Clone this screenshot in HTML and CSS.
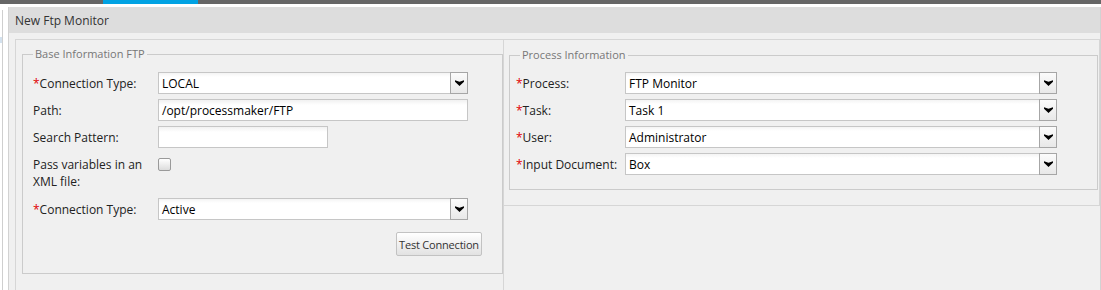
FILE: index.html
```html
<!DOCTYPE html>
<html lang="en">
<head>
  <meta charset="UTF-8">
  <title>New Ftp Monitor</title>
  <link rel="stylesheet" href="styles.css">
</head>
<body>
  <div class="topbar"><div class="topbar-tab"></div></div>

  <div class="page">
    <div class="side">
      <div class="side-strip"></div>
      <div class="side-line"></div>
    </div>

    <div class="panel">
      <div class="panel-header">New Ftp Monitor</div>
      <div class="panel-body">
        <div class="columns">

          <div class="col col-left">
            <fieldset class="group group-base">
              <legend>Base Information FTP</legend>

              <div class="row">
                <label class="lbl lbl-base"><span class="req">*</span>Connection Type:</label>
                <div class="combo combo-base">
                  <span class="combo-value">LOCAL</span>
                  <span class="combo-trigger"><svg width="9" height="6" viewBox="0 0 9 6"><path d="M0 0.3 L4.5 1.8 L9 0.3 L9 1.8 L4.5 6 L0 1.8 Z" fill="#000"/></svg></span>
                </div>
              </div>

              <div class="row">
                <label class="lbl lbl-base">Path:</label>
                <div class="field field-wide">/opt/processmaker/FTP</div>
              </div>

              <div class="row">
                <label class="lbl lbl-base">Search Pattern:</label>
                <div class="field field-short"></div>
              </div>

              <div class="row row-check">
                <label class="lbl lbl-base lbl-multi">Pass variables in an XML file:</label>
                <span class="checkbox"></span>
              </div>

              <div class="row">
                <label class="lbl lbl-base"><span class="req">*</span>Connection Type:</label>
                <div class="combo combo-base">
                  <span class="combo-value">Active</span>
                  <span class="combo-trigger"><svg width="9" height="6" viewBox="0 0 9 6"><path d="M0 0.3 L4.5 1.8 L9 0.3 L9 1.8 L4.5 6 L0 1.8 Z" fill="#000"/></svg></span>
                </div>
              </div>

              <div class="actions">
                <button class="btn">Test Connection</button>
              </div>
            </fieldset>
          </div>

          <div class="col col-right">
            <fieldset class="group group-process">
              <legend>Process Information</legend>

              <div class="row">
                <label class="lbl lbl-process"><span class="req">*</span>Process:</label>
                <div class="combo combo-process">
                  <span class="combo-value">FTP Monitor</span>
                  <span class="combo-trigger"><svg width="9" height="6" viewBox="0 0 9 6"><path d="M0 0.3 L4.5 1.8 L9 0.3 L9 1.8 L4.5 6 L0 1.8 Z" fill="#000"/></svg></span>
                </div>
              </div>

              <div class="row">
                <label class="lbl lbl-process"><span class="req">*</span>Task:</label>
                <div class="combo combo-process">
                  <span class="combo-value">Task 1</span>
                  <span class="combo-trigger"><svg width="9" height="6" viewBox="0 0 9 6"><path d="M0 0.3 L4.5 1.8 L9 0.3 L9 1.8 L4.5 6 L0 1.8 Z" fill="#000"/></svg></span>
                </div>
              </div>

              <div class="row">
                <label class="lbl lbl-process"><span class="req">*</span>User:</label>
                <div class="combo combo-process">
                  <span class="combo-value">Administrator</span>
                  <span class="combo-trigger"><svg width="9" height="6" viewBox="0 0 9 6"><path d="M0 0.3 L4.5 1.8 L9 0.3 L9 1.8 L4.5 6 L0 1.8 Z" fill="#000"/></svg></span>
                </div>
              </div>

              <div class="row row-last">
                <label class="lbl lbl-process"><span class="req">*</span>Input Document:</label>
                <div class="combo combo-process">
                  <span class="combo-value">Box</span>
                  <span class="combo-trigger"><svg width="9" height="6" viewBox="0 0 9 6"><path d="M0 0.3 L4.5 1.8 L9 0.3 L9 1.8 L4.5 6 L0 1.8 Z" fill="#000"/></svg></span>
                </div>
              </div>
            </fieldset>
          </div>

        </div>
      </div>
    </div>
  </div>
</body>
</html>
```

FILE: styles.css
```css
body {
  margin: 0;
  background: #ffffff;
  font-family: "Open Sans", "Liberation Sans", sans-serif;
  font-size: 12px;
  color: #222;
  overflow: hidden;
}
.topbar {
  height: 4px;
  background: #666666;
}
.topbar-tab {
  margin-left: 103px;
  width: 95px;
  height: 4px;
  background: #00a2e3;
}
.page {
  display: flex;
  margin-top: 3px;
  height: 290px;
}
.side {
  display: flex;
  width: 8px;
}
.side-strip {
  width: 2px;
  height: 6px;
  margin-top: 30px;
  background: #d3e1ee;
}
.side-line {
  width: 1px;
  margin-top: 3px;
  background: #cfcfcf;
}
.panel {
  flex: 1;
  border-left: 1px solid #d2d2d2;
  border-right: 1px solid #d2d2d2;
  background: #f0f0f0;
}
.panel-header {
  height: 26px;
  line-height: 27px;
  padding-left: 6px;
  background: #dddddd;
  color: #333;
  font-size: 12px;
}
.panel-body {
  display: block;
  padding: 6px 0 0 6px;
}
.columns {
  display: flex;
  align-items: flex-start;
}
.col {
  border: 1px solid #d6d6d6;
}
.col-left {
  width: 487px;
}
.col-right {
  flex: 1;
  border-left: none;
}
.group {
  margin: 0;
  border: 1px solid #cbcbcb;
  min-width: 0;
}
.group legend {
  padding: 0 2px;
  font-size: 11px;
  line-height: 14px;
  color: #777;
}
.group-base {
  margin: 7px 0 20px 6px;
  padding: 11px 20px 17px 10px;
}
.group-process {
  margin: 8px 1px 15px 5px;
  padding: 10px 0 14px 6px;
}
.group-process legend {
  margin-left: 4px;
}
.row {
  display: flex;
  align-items: flex-start;
  margin-bottom: 5px;
}
.row-last {
  margin-bottom: 0;
}
.row-check {
  margin-bottom: 8px;
}
.lbl {
  flex: none;
  padding-top: 4px;
  line-height: 16px;
  color: #222;
}
.lbl-base {
  width: 125px;
}
.lbl-process {
  width: 109px;
}
.lbl-multi {
  padding-top: 3px;
  line-height: 17px;
  width: 120px;
  margin-right: 5px;
}
.req {
  color: #e00000;
}
.field, .combo {
  box-sizing: border-box;
  height: 22px;
  background: linear-gradient(#f1f1f1, #ffffff 5px);
  color: #000;
}
.field {
  border: 1px solid #c6c6c6;
  padding-left: 3px;
  line-height: 21px;
}
.field-wide {
  width: 310px;
}
.field-short {
  width: 170px;
}
.combo {
  display: flex;
}
.combo-base {
  width: 310px;
}
.combo-process {
  width: 432px;
}
.combo-value {
  flex: 1;
  border: 1px solid #c6c6c6;
  border-right: none;
  padding-left: 3px;
  line-height: 21px;
}
.combo-trigger {
  display: flex;
  align-items: center;
  justify-content: center;
  width: 16px;
  border: 1px solid #a6a6a6;
  background: linear-gradient(#fbfbfb, #e8e8e8);
}
.checkbox {
  box-sizing: border-box;
  width: 13px;
  height: 13px;
  margin-top: 5px;
  border: 1px solid #9a9a9a;
  border-radius: 2px;
  background: linear-gradient(#ffffff, #dcdcdc);
}
.actions {
  display: flex;
  justify-content: flex-end;
  margin-top: 12px;
}
.btn {
  width: 86px;
  height: 24px;
  padding: 0;
  border: 1px solid #c2c2c2;
  border-radius: 2px;
  background: linear-gradient(#ffffff, #e2e2e2);
  font-family: "Open Sans", "Liberation Sans", sans-serif;
  font-size: 11px;
  letter-spacing: -0.2px;
  color: #333;
}
```
